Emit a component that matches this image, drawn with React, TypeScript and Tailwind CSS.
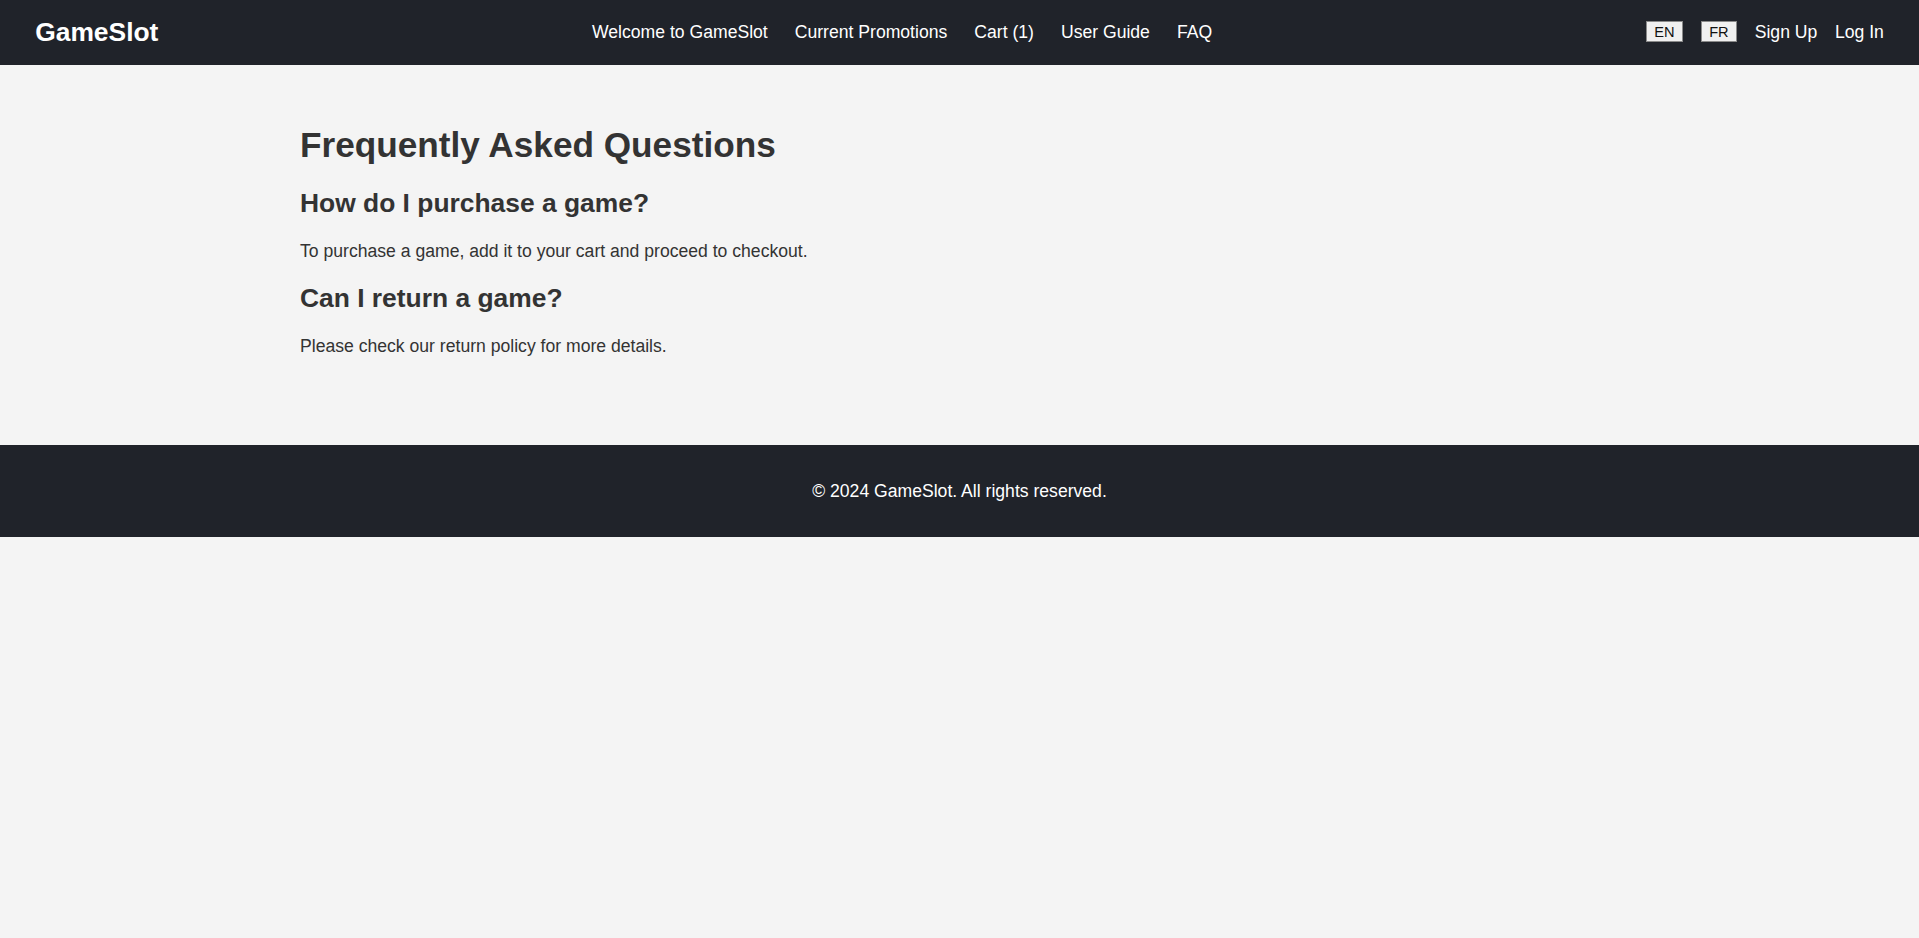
import React from 'react';

const navLinks = ['Welcome to GameSlot', 'Current Promotions', 'Cart (1)', 'User Guide', 'FAQ'];

const faqs = [
  { q: 'How do I purchase a game?', a: 'To purchase a game, add it to your cart and proceed to checkout.' },
  { q: 'Can I return a game?', a: 'Please check our return policy for more details.' },
];

export default function App() {
  return (
    <div className="min-h-[938px] bg-[#f4f4f4] text-[#333] text-[17.6px] font-['Liberation_Sans',Arial,sans-serif]">
      <header className="flex items-center justify-between bg-[#20232a] px-[35.2px] pt-[16.6px] pb-[18.6px] text-white">
        <div className="text-[26.4px] font-bold leading-[30px]">GameSlot</div>
        <nav className="flex items-center gap-[27px]">
          {navLinks.map(link => (
            <a key={link} href="#" className="text-[17.6px] leading-[20px] text-white">
              {link}
            </a>
          ))}
        </nav>
        <div className="flex items-center gap-[17.6px]">
          <button className="h-[21px] border border-[#8a8a8a] bg-[#f0f0f0] px-[7.5px] text-[14.6px] font-normal leading-[16px] text-[#111]">
            EN
          </button>
          <button className="h-[21px] border border-[#8a8a8a] bg-[#f0f0f0] px-[7.5px] text-[14.6px] font-normal leading-[16px] text-[#111]">
            FR
          </button>
          <a href="#" className="text-[17.6px] leading-[20px] text-white">Sign Up</a>
          <a href="#" className="text-[17.6px] leading-[20px] text-white">Log In</a>
        </div>
      </header>

      <main className="mx-auto w-full max-w-[1319px] pt-[60px] pb-[89px]">
        <h1 className="text-[35.2px] font-bold leading-[40px]">Frequently Asked Questions</h1>
        {faqs.map((item, i) => (
          <div key={item.q}>
            <h2 className={i === 0 ? 'mt-[23px] text-[26.4px] font-bold leading-[30px]' : 'mt-[22px] text-[26.4px] font-bold leading-[30px]'}>
              {item.q}
            </h2>
            <p className="mt-[23px] leading-[20px]">{item.a}</p>
          </div>
        ))}
      </main>

      <footer className="bg-[#20232a] py-[36px] text-center text-white">
        <p className="leading-[20px]">© 2024 GameSlot. All rights reserved.</p>
      </footer>
    </div>
  );
}
